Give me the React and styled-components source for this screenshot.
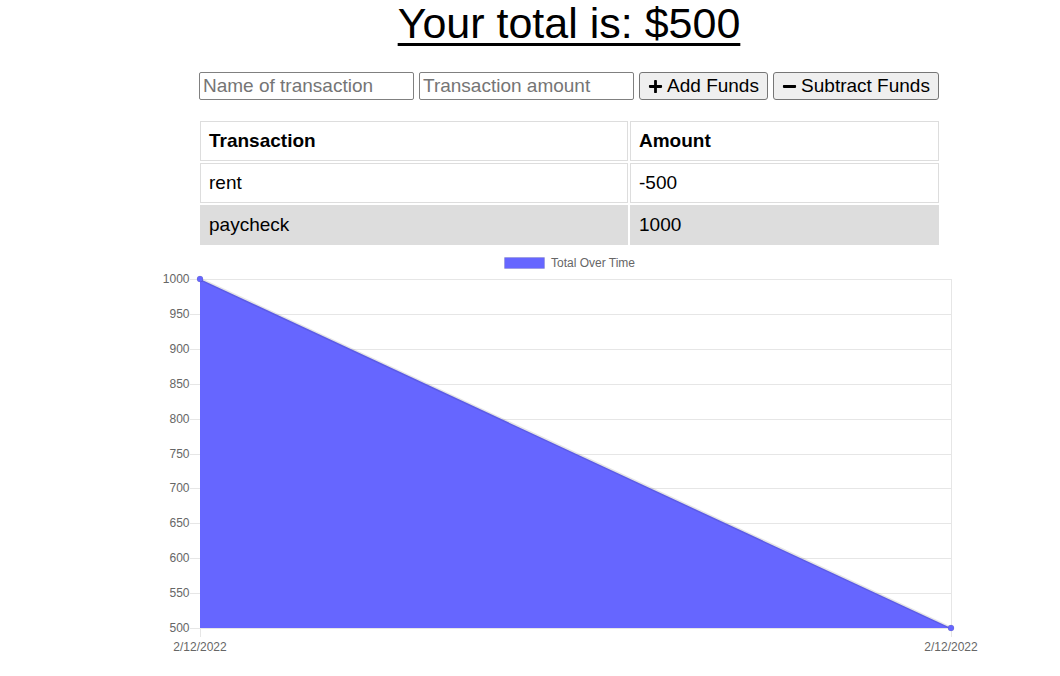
import React from "react";
import styled, { createGlobalStyle } from "styled-components";
import { FaPlus, FaMinus } from "react-icons/fa";

const Global = createGlobalStyle`
  html, body { margin: 0; padding: 0; background: #fff; }
  body { font-family: "Liberation Sans", Arial, sans-serif; color: #000; }
`;

const Page = styled.div`
  width: 1060px;
  height: 676px;
  overflow: hidden;
  padding-left: 78px;
  box-sizing: border-box;
  display: flex;
  flex-direction: column;
  align-items: center;
`;

const Title = styled.h1`
  margin: 0;
  padding-top: 2px;
  font-size: 43px;
  font-weight: 400;
  line-height: 42px;
  text-decoration: underline;
  text-decoration-thickness: 3px;
  text-underline-offset: 5px;
`;

const Form = styled.div`
  margin-top: 28px;
  display: flex;
  gap: 5px;
  height: 28px;
`;

const Input = styled.input`
  box-sizing: border-box;
  width: 215px;
  height: 28px;
  padding: 1px 3px;
  border: 1px solid #808080;
  border-radius: 2px;
  font-family: "Liberation Sans", Arial, sans-serif;
  font-size: 19px;
  color: #000;
  outline: none;
  &::placeholder { color: #757575; }
`;

const Button = styled.button`
  box-sizing: border-box;
  width: ${(p) => p.$w}px;
  height: 28px;
  padding: 0 6px;
  display: flex;
  align-items: center;
  justify-content: center;
  gap: 4px;
  background: #efefef;
  border: 1px solid #767676;
  border-radius: 3px;
  font-family: "Liberation Sans", Arial, sans-serif;
  font-size: 19px;
  color: #000;
  svg { width: 15px; height: 15px; flex: none; }
`;

const Table = styled.table`
  margin-top: 19px;
  margin-left: 1px;
  table-layout: fixed;
  border-collapse: separate;
  border-spacing: 2px;
  width: 743px;
`;

const Cell = styled.td`
  box-sizing: border-box;
  height: 40px;
  padding: 8px 8px;
  border: 1px solid #dddddd;
  background: ${(p) => (p.$shaded ? "#dddddd" : "#ffffff")};
  font-size: 19px;
  line-height: 22px;
  font-weight: ${(p) => (p.$head ? 700 : 400)};
  text-align: left;
  width: ${(p) => (p.$w ? `${p.$w}px` : "auto")};
`;

const Chart = styled.svg`
  display: block;
  margin-top: 1px;
  flex: none;
`;

const rows = [
  { name: "rent", value: "-500" },
  { name: "paycheck", value: "1000" },
];

function LineChart() {
  const left = 45;
  const right = 796;
  const top = 31;
  const bottom = 380;
  const step = (bottom - top) / 10;
  const ticks = Array.from({ length: 11 }, (_, i) => ({
    y: top + i * step,
    label: 1000 - i * 50,
  }));
  const grid = "#e6e6e6";
  const tc = "#666";
  return (
    <Chart width="828" height="426" viewBox="0 0 828 426">
      <rect x="349.5" y="9.5" width="40" height="11" fill="#6666ff" stroke="rgba(0,0,0,0.1)" />
      <text x="396" y="19" fontSize="12" fill={tc} fontFamily="Liberation Sans, Arial, sans-serif">
        Total Over Time
      </text>
      {ticks.map((t) => (
        <g key={t.label}>
          <line x1={left - 10} x2={right} y1={Math.round(t.y) + 0.5} y2={Math.round(t.y) + 0.5} stroke={grid} />
          <text
            x={left - 10.5}
            y={Math.round(t.y) + 4}
            fontSize="12"
            fill={tc}
            textAnchor="end"
            fontFamily="Liberation Sans, Arial, sans-serif"
          >
            {t.label}
          </text>
        </g>
      ))}
      <line x1={left + 0.5} x2={left + 0.5} y1={top} y2={bottom + 9} stroke={grid} />
      <line x1={right + 0.5} x2={right + 0.5} y1={top} y2={bottom + 9} stroke={grid} />
      <polygon points={`${left},${top} ${right},${bottom} ${left},${bottom}`} fill="#6666ff" />
      <line x1={left} y1={top} x2={right} y2={bottom} stroke="rgba(0,0,0,0.1)" strokeWidth="3" />
      <circle cx={left} cy={top} r="3" fill="#6666ff" stroke="rgba(0,0,0,0.1)" />
      <circle cx={right} cy={bottom} r="3" fill="#6666ff" stroke="rgba(0,0,0,0.1)" />
      <text x={left} y={bottom + 23} fontSize="12" fill={tc} textAnchor="middle" fontFamily="Liberation Sans, Arial, sans-serif">
        2/12/2022
      </text>
      <text x={right} y={bottom + 23} fontSize="12" fill={tc} textAnchor="middle" fontFamily="Liberation Sans, Arial, sans-serif">
        2/12/2022
      </text>
    </Chart>
  );
}

export default function App() {
  return (
    <>
      <Global />
      <Page>
        <Title>Your total is: $500</Title>
        <Form>
          <Input placeholder="Name of transaction" />
          <Input placeholder="Transaction amount" />
          <Button $w={129}>
            <FaPlus />
            Add Funds
          </Button>
          <Button $w={166}>
            <FaMinus />
            Subtract Funds
          </Button>
        </Form>
        <Table>
          <thead>
            <tr>
              <Cell as="th" $head $w={428}>Transaction</Cell>
              <Cell as="th" $head $w={309}>Amount</Cell>
            </tr>
          </thead>
          <tbody>
            {rows.map((r, i) => (
              <tr key={r.name}>
                <Cell $shaded={i % 2 === 1}>{r.name}</Cell>
                <Cell $shaded={i % 2 === 1}>{r.value}</Cell>
              </tr>
            ))}
          </tbody>
        </Table>
        <LineChart />
      </Page>
    </>
  );
}
